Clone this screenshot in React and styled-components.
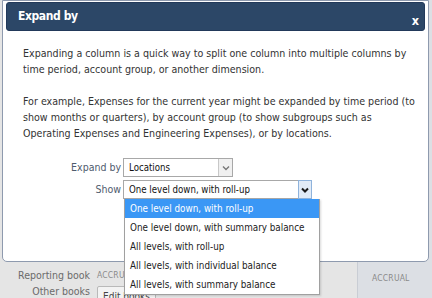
import React from "react";
import styled, { createGlobalStyle } from "styled-components";

const FONT = `"DejaVu Sans Condensed", "DejaVu Sans", sans-serif`;

const Global = createGlobalStyle`
  html, body { margin: 0; padding: 0; }
  body {
    width: 432px;
    height: 298px;
    overflow: hidden;
    background: #e5e5e5;
    font-family: ${FONT};
  }
  * { box-sizing: border-box; }
`;

const Page = styled.div`
  position: relative;
  width: 432px;
  height: 298px;
  overflow: hidden;
  display: grid;
  grid-template-columns: 357px 75px;
  background: #e5e5e5;
`;

const Main = styled.main`
  padding-top: 268px;
`;

const BookGrid = styled.div`
  display: grid;
  grid-template-columns: 90px auto;
  column-gap: 7px;
  row-gap: 1px;
  align-items: start;
`;

const BookLabel = styled.div`
  text-align: right;
  font-size: 10.5px;
  line-height: ${(p) => (p.$tall ? 16 : 14)}px;
  color: #6b6b6b;
  white-space: nowrap;
`;

const BookValue = styled.div`
  font-size: 8.5px;
  line-height: 14px;
  color: #8a8a8a;
  letter-spacing: 0.2px;
`;

const SmallButton = styled.button`
  justify-self: start;
  margin-top: 3px;
  height: 22px;
  padding: 0 5px;
  border: 1px solid #b9b9b9;
  border-radius: 2px;
  background: #f3f3f3;
  font-family: ${FONT};
  font-size: 10px;
  color: #444;
  line-height: 20px;
`;

const SidePanel = styled.aside`
  background: #dcdfe4;
  border-left: 1px solid #c9cdd4;
  padding: 271px 0 0 14px;
  font-size: 8.5px;
  line-height: 14px;
  color: #8a8a8a;
  letter-spacing: 0.2px;
`;

const Dialog = styled.section`
  position: absolute;
  left: 2px;
  top: 0;
  width: 427px;
  height: 262px;
  background: #fff;
  border: 1px solid #8e9aae;
  border-radius: 0 0 5px 5px;
  padding: 1px 3px 0 3px;
`;

const Header = styled.header`
  height: 29px;
  background: #2c4767;
  border: 1px solid #22395a;
  border-radius: 3px;
  display: flex;
  align-items: center;
  justify-content: space-between;
  padding: 0 5px 0 11px;
  color: #fff;
  font-weight: bold;
`;

const Title = styled.h1`
  margin: -2px 0 0 0;
  font-size: 12px;
  letter-spacing: -0.4px;
  font-weight: bold;
  line-height: 16px;
`;

const Close = styled.span`
  font-size: 12.5px;
  line-height: 12px;
  margin-top: 8px;
`;

const Body = styled.div`
  padding: 14px 17px 0 17px;
  color: #333;
`;

const Para = styled.p`
  margin: 0;
  font-size: 10.6px;
  line-height: 16px;
  white-space: nowrap;
  & + & { margin-top: 16px; }
`;

const Form = styled.div`
  margin-top: 17px;
  display: grid;
  grid-template-columns: 98px auto;
  column-gap: 2px;
  row-gap: 3px;
  align-items: center;
`;

const Label = styled.label`
  text-align: right;
  font-size: 10.5px;
  line-height: 19px;
  color: #4f5b6d;
`;

const Select = styled.div`
  position: relative;
  display: flex;
  width: ${(p) => p.$w}px;
  height: 19px;
  border: 1px solid #a8a8a8;
  background: #fff;
`;

const SelectText = styled.span`
  flex: 1;
  padding-left: 5px;
  font-size: 9.6px;
  line-height: 17px;
  color: #111;
  white-space: nowrap;
`;

const Arrow = styled.span`
  width: 14px;
  display: flex;
  align-items: center;
  justify-content: center;
  background: ${(p) => (p.$focus ? "#e1ebf7" : "#f0f0f0")};
  border-left: 1px solid ${(p) => (p.$focus ? "#8fb3dc" : "#c8c8c8")};
  ${(p) => p.$focus && "border: 1px solid #8fb3dc; margin: -1px -1px -1px 0;"}
  color: ${(p) => (p.$focus ? "#1a1a1a" : "#777")};
`;

const Menu = styled.ul`
  position: absolute;
  top: 18px;
  left: 0;
  width: 196px;
  margin: 0;
  padding: 0;
  list-style: none;
  background: #fff;
  border: 1px solid #a0a0a0;
  border-top: none;
  box-shadow: 1px 1px 2px rgba(0, 0, 0, 0.15);
  z-index: 2;
`;

const MenuItem = styled.li`
  height: 19px;
  padding-left: 5px;
  font-size: 9.8px;
  line-height: 19px;
  white-space: nowrap;
  color: ${(p) => (p.$active ? "#fff" : "#222")};
  background: ${(p) => (p.$active ? "#3a97f5" : "transparent")};
`;

const Chevron = ({ bold }) => (
  <svg width="8" height="6" viewBox="0 0 8 6">
    <polyline
      points="1,1.5 4,4.5 7,1.5"
      fill="none"
      stroke="currentColor"
      strokeWidth={bold ? 2 : 1.4}
    />
  </svg>
);

const options = [
  "One level down, with roll-up",
  "One level down, with summary balance",
  "All levels, with roll-up",
  "All levels, with individual balance",
  "All levels, with summary balance",
];

export default function App() {
  return (
    <>
      <Global />
      <Page>
        <Main>
          <BookGrid>
            <BookLabel>Reporting book</BookLabel>
            <BookValue>ACCRUAL</BookValue>
            <BookLabel $tall>Other books</BookLabel>
            <SmallButton>Edit books</SmallButton>
          </BookGrid>
        </Main>
        <SidePanel>ACCRUAL</SidePanel>

        <Dialog>
          <Header>
            <Title>Expand by</Title>
            <Close>x</Close>
          </Header>
          <Body>
            <Para>
              Expanding a column is a quick way to split one column into multiple columns by
              <br />
              time period, account group, or another dimension.
            </Para>
            <Para>
              For example, Expenses for the current year might be expanded by time period (to
              <br />
              show months or quarters), by account group (to show subgroups such as
              <br />
              Operating Expenses and Engineering Expenses), or by locations.
            </Para>
            <Form>
              <Label>Expand by</Label>
              <Select $w={110}>
                <SelectText>Locations</SelectText>
                <Arrow>
                  <Chevron />
                </Arrow>
              </Select>
              <Label>Show</Label>
              <Select $w={189}>
                <SelectText>One level down, with roll-up</SelectText>
                <Arrow $focus>
                  <Chevron bold />
                </Arrow>
                <Menu>
                  {options.map((o, i) => (
                    <MenuItem key={o} $active={i === 0}>
                      {o}
                    </MenuItem>
                  ))}
                </Menu>
              </Select>
            </Form>
          </Body>
        </Dialog>
      </Page>
    </>
  );
}
